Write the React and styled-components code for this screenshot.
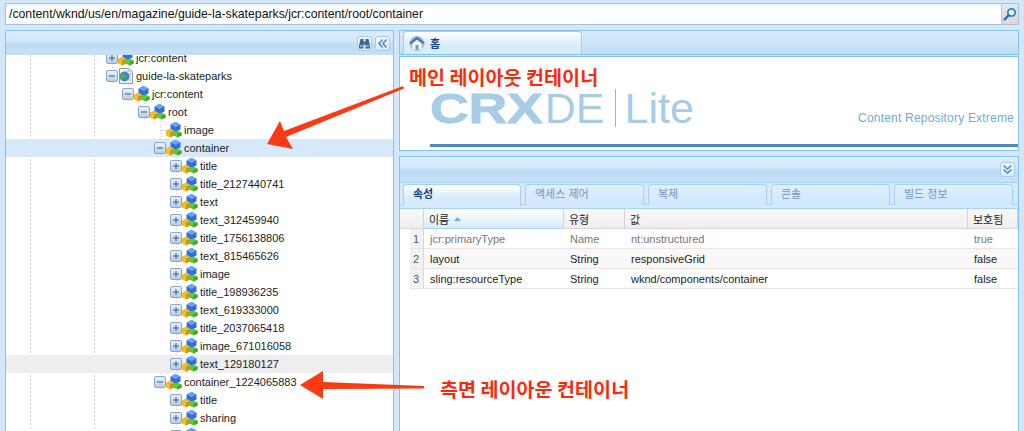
import React from 'react';
import styled, { createGlobalStyle } from 'styled-components';

const GlobalStyle = createGlobalStyle`
  html, body {
    margin: 0;
    padding: 0;
    width: 1024px;
    height: 431px;
    overflow: hidden;
    background: #d3e7fa;
    font-family: "Liberation Sans", "Noto Sans CJK KR", sans-serif;
  }
`;

const Page = styled.div`
  position: relative;
  width: 1024px;
  height: 431px;
  box-sizing: border-box;
  padding: 3px 5px 0;
  display: flex;
  flex-direction: column;
  overflow: hidden;
`;

const AddressBar = styled.div`
  height: 22px;
  box-sizing: border-box;
  border: 1px solid #abbde0;
  background: linear-gradient(#eef3f3 0, #ffffff 5px);
  display: flex;
  align-items: center;
  font-size: 12.25px;
  color: #111;
`;

const AddressText = styled.div`
  flex: 1;
  padding-left: 3px;
`;

const SearchButton = styled.div`
  width: 16px;
  height: 20px;
  background: linear-gradient(#dfeaf4, #e6d3d0);
  border-left: 1px solid #b9c6df;
  display: flex;
  align-items: center;
  justify-content: center;
`;

const Main = styled.div`
  flex: 1;
  display: flex;
  gap: 5px;
  margin-top: 5px;
  min-height: 0;
`;

const LeftPanel = styled.div`
  width: 389px;
  display: flex;
  flex-direction: column;
  border: 1px solid #85c2f8;
  border-bottom: 0;
  box-sizing: border-box;
  background: #fff;
`;

const PanelHeader = styled.div`
  height: ${p => p.$height}px;
  flex: none;
  box-sizing: border-box;
  display: flex;
  align-items: center;
  justify-content: flex-end;
  gap: 3px;
  padding-right: ${p => p.$right}px;
  background: linear-gradient(#dcedfc 0%, #d3e7fa 40%, #bfdcf5 55%, #c6e0f7 100%);
`;

const ToolButton = styled.div`
  width: 13px;
  height: 13px;
  border: 1px solid #a5cdf0;
  border-radius: 3px;
  background: linear-gradient(#f2f8fe, #d6e9fb);
  display: flex;
  align-items: center;
  justify-content: center;
`;

const Tree = styled.div`
  flex: 1;
  overflow: hidden;
  background-color: #fff;
  background-image:
    repeating-linear-gradient(#e8c9d0 0 2px, transparent 2px 4px),
    repeating-linear-gradient(#e8c9d0 0 2px, transparent 2px 4px);
  background-size: 1px 100%, 1px 100%;
  background-position: 24px 0, 88px 0;
  background-repeat: no-repeat;
`;

const TreeRows = styled.div`
  margin-top: -6px;
`;

const Row = styled.div`
  height: 18px;
  display: flex;
  align-items: center;
  padding-left: ${p => 100 + p.$depth * 16}px;
  font-size: 11px;
  color: #1c1c1c;
  background: ${p => (p.$mark === 'blue' ? '#d5e9fb' : p.$mark === 'grey' ? '#eeeeee' : 'transparent')};
`;

const Slot = styled.div`
  position: relative;
  width: 12px;
  height: 18px;
  flex: none;
  display: flex;
  align-items: center;
  background-image: repeating-linear-gradient(#e8c9d0 0 1px, transparent 1px 3px);
  background-size: 1px 100%;
  background-position: 6px 0;
  background-repeat: no-repeat;
`;

const Stub = styled.div`
  width: 6px;
  margin-left: 6px;
  border-top: 1px dotted #e0c0c8;
`;

const Label = styled.span`
  margin-left: 2px;
  white-space: nowrap;
`;

const RightColumn = styled.div`
  flex: 1;
  display: flex;
  flex-direction: column;
  min-width: 0;
`;

const TabHead = styled.div`
  height: 25px;
  flex: none;
  box-sizing: border-box;
  border: 1px solid #85c2f8;
  padding: 1px 0 0 3px;
  display: flex;
  align-items: flex-end;
  background: linear-gradient(#dcedfc, #bfdcf5);
`;

const HomeTab = styled.div`
  width: 179px;
  height: 23px;
  box-sizing: border-box;
  border: 1px solid #9ccbf3;
  border-bottom: 0;
  border-radius: 4px 4px 0 0;
  background: linear-gradient(#ffffff, #d8ecfd 60%);
  display: flex;
  align-items: center;
  gap: 5px;
  padding-left: 5px;
  font-size: 11px;
  font-weight: 700;
  color: #15428b;
`;

const LogoBody = styled.div`
  height: 95px;
  flex: none;
  margin-top: 1px;
  box-sizing: border-box;
  border: 1px solid #85c2f8;
  background: #fff;
  padding-top: 32px;
`;

const LogoRow = styled.div`
  height: 38px;
  display: flex;
  padding: 0 4px 0 30px;
  color: #a6cce6;
  font-size: 43px;
  line-height: 38px;
`;

const LogoBold = styled.span`
  display: inline-block;
  font-weight: 700;
  -webkit-text-stroke: 0.8px #a6cce6;
  transform: scaleX(1.24);
  transform-origin: left center;
  margin-right: 24px;
`;

const LogoDivider = styled.div`
  width: 1px;
  margin: 0 9px 0 10px;
  background: #8cbcdc;
`;

const Tagline = styled.div`
  margin-left: auto;
  align-self: flex-end;
  margin-bottom: 2px;
  font-size: 12px;
  line-height: 14px;
  letter-spacing: 0.2px;
  color: #6fabd8;
`;

const LogoBar = styled.div`
  height: 3px;
  margin: 17px 0 0 30px;
  background: #4a8bbb;
`;

const LowerPanel = styled.div`
  flex: 1;
  margin-top: 5px;
  box-sizing: border-box;
  border: 1px solid #85c2f8;
  border-bottom: 0;
  display: flex;
  flex-direction: column;
  background: #fff;
  min-height: 0;
`;

const TabStrip = styled.div`
  height: 26px;
  flex: none;
  box-sizing: border-box;
  display: flex;
  gap: 4px;
  padding: 1px 0 0 3px;
  border-top: 1px solid #a3d0f7;
  background: linear-gradient(#d6e9fb 0, #d6e9fb 21px, #a9d3f7 21px, #a9d3f7 22px, #d6e9fb 22px);
`;

const Tab = styled.div`
  width: ${p => p.$width}px;
  height: ${p => (p.$active ? 22 : 21)}px;
  box-sizing: border-box;
  border: 1px solid #a9d0f2;
  border-bottom: 0;
  border-radius: 4px 4px 0 0;
  background: ${p => (p.$active ? 'linear-gradient(#ffffff, #d8ecfd 60%)' : 'linear-gradient(#e2f0fc, #cde6fd)')};
  padding-left: 9px;
  line-height: 19px;
  font-size: 11px;
  font-weight: ${p => (p.$active ? 700 : 400)};
  color: ${p => (p.$active ? '#15428b' : '#6d97c4')};
`;

const Grid = styled.div`
  display: grid;
  grid-template-columns: 24px 140px 61px 343px 1fr;
  border-top: 1px solid #a9d3f7;
`;

const HeadCell = styled.div`
  height: 20px;
  box-sizing: border-box;
  display: flex;
  align-items: center;
  gap: 5px;
  padding-left: 5px;
  font-size: 11px;
  color: #222;
  border-right: 1px solid #ddd0d0;
  border-bottom: 1px solid ${p => (p.$sorted ? '#a9d3f7' : '#e2d2d2')};
  background: ${p => (p.$sorted ? 'linear-gradient(#ffffff, #d6ebfd)' : 'linear-gradient(#f9f8f8, #efefef)')};
`;

const Cell = styled.div`
  height: 20px;
  box-sizing: border-box;
  display: flex;
  align-items: center;
  padding-left: 6px;
  font-size: 11px;
  color: ${p => (p.$muted ? '#777' : '#1c1c1c')};
  background: ${p => (p.$odd ? '#fff' : '#faf7f8')};
  border-bottom: 1px solid #eee3e3;
`;

const NumCell = styled.div`
  height: 20px;
  box-sizing: border-box;
  margin-left: 10px;
  display: flex;
  align-items: center;
  justify-content: flex-end;
  padding-right: 4px;
  font-size: 11px;
  color: #555;
  background: #f2f2f2;
  border-right: 1px solid #e2d5d5;
  border-bottom: 1px solid #eee3e3;
`;

const Overlay = styled.svg`
  position: absolute;
  left: 0;
  top: 0;
  pointer-events: none;
`;

const Callout = styled.div`
  position: absolute;
  left: ${p => p.$left}px;
  top: ${p => p.$top}px;
  font-family: "Noto Sans CJK KR", sans-serif;
  font-size: 19.6px;
  line-height: 24px;
  font-weight: 700;
  color: #fb2a0a;
  white-space: nowrap;
`;

const NodeIcon = () => (
  <svg width="16" height="16" viewBox="0 0 16 16" style={{ flex: 'none' }}>
    <path d="M4.500 2.500 L9.500 0 L14.500 2.500 V7.500 L9.500 10 L4.500 7.500Z" fill="#2f6fd6" />
    <path d="M4.500 2.500 L9.500 0 L14.500 2.500 L9.500 5Z" fill="#6ba3f2" />
    <path d="M0 8.500 L4 6.500 L8 8.500 V13.500 L4 15.500 L0 13.500Z" fill="#ecbf30" />
    <path d="M4 10.500 L8 8.500 V13.500 L4 15.500Z" fill="#c9980f" />
    <path d="M7.500 10.500 L11.500 8.500 L15.500 10.500 V13.500 L11.500 15.500 L7.500 13.500Z" fill="#5fc738" />
    <path d="M11.500 12 L15.500 10.500 V13.500 L11.500 15.500Z" fill="#3ea520" />
  </svg>
);

const PageIcon = () => (
  <svg width="16" height="16" viewBox="0 0 16 16" style={{ flex: 'none' }}>
    <path d="M1.500 0.500 H11 L14.500 4 V15.500 H1.500Z" fill="#f0f3f6" stroke="#8d9aa8" />
    <path d="M9 3h3M11 6h2M12 9h1M11 12h2" stroke="#8aa0b4" />
    <circle cx="6.500" cy="8.500" r="5" fill="#3f86c9" />
    <path d="M3 7 Q6 4.500 8 7 Q8.500 10 5.500 10 Q4 12.500 2.500 10Z" fill="#55b13a" />
  </svg>
);

const Expander = ({ open }) => (
  <svg width="12" height="12" viewBox="0 0 12 12" style={{ position: 'relative' }}>
    <defs>
      <linearGradient id="exp" x1="0" y1="0" x2="0" y2="1">
        <stop offset="0" stopColor="#eaf2f9" />
        <stop offset="1" stopColor="#b5cde2" />
      </linearGradient>
    </defs>
    <rect x="0.500" y="0.500" width="11" height="11" rx="1.500" fill="url(#exp)" stroke="#86a8c5" />
    <path d={open ? 'M3 6h6' : 'M3 6h6M6 3v6'} stroke="#2f5f8c" strokeWidth="1" />
  </svg>
);

const SearchIcon = () => (
  <svg width="14" height="14" viewBox="0 0 14 14">
    <circle cx="8.500" cy="5.500" r="3.700" fill="#e8f3fb" stroke="#2a86c8" strokeWidth="1.800" />
    <path d="M5.500 8.500 L1.500 12.500" stroke="#1c6aa8" strokeWidth="2.200" strokeLinecap="round" />
  </svg>
);

const BinocularsIcon = () => (
  <svg width="11" height="11" viewBox="0 0 11 11">
    <path d="M1.500 1h3v2.500h2V1h3l1.500 6.500V10.500H6.500V6.500h-2V10.500H0V7.500Z" fill="#35689c" />
    <path d="M1 8h3M7 8h3" stroke="#d5e6f5" />
  </svg>
);

const ChevronsIcon = ({ dir }) => (
  <svg width="11" height="11" viewBox="0 0 11 11" style={{ transform: dir === 'down' ? 'rotate(-90deg)' : 'none' }}>
    <path d="M5.500 1.500 L2 5.500 L5.500 9.500 M9.500 1.500 L6 5.500 L9.500 9.500" fill="none" stroke="#4d8cc4" strokeWidth="1.600" />
  </svg>
);

const HomeIcon = () => (
  <svg width="16" height="16" viewBox="0 0 16 16" style={{ flex: 'none' }}>
    <circle cx="8" cy="8.500" r="7.500" fill="#a9bccf" />
    <path d="M0.500 7.500 L8 1.500 L15.500 7.500 L14 9 L8 4.500 L2 9Z" fill="#3f78b5" />
    <path d="M3.500 8.500 L8 5 L12.500 8.500 V14.500 H3.500Z" fill="#f4f6f8" />
    <rect x="6.500" y="10" width="3" height="4.500" fill="#6f97c2" />
  </svg>
);

const SortArrow = () => (
  <svg width="7" height="4" viewBox="0 0 7 4">
    <path d="M0 4 L3.500 0 L7 4Z" fill="#6aa9e2" />
  </svg>
);

const treeRows = [
  { label: 'jcr:content', depth: 0, exp: 'plus' },
  { label: 'guide-la-skateparks', depth: 0, exp: 'minus', page: true },
  { label: 'jcr:content', depth: 1, exp: 'minus' },
  { label: 'root', depth: 2, exp: 'minus' },
  { label: 'image', depth: 3 },
  { label: 'container', depth: 3, exp: 'minus', mark: 'blue' },
  { label: 'title', depth: 4, exp: 'plus' },
  { label: 'title_2127440741', depth: 4, exp: 'plus' },
  { label: 'text', depth: 4, exp: 'plus' },
  { label: 'text_312459940', depth: 4, exp: 'plus' },
  { label: 'title_1756138806', depth: 4, exp: 'plus' },
  { label: 'text_815465626', depth: 4, exp: 'plus' },
  { label: 'image', depth: 4, exp: 'plus' },
  { label: 'title_198936235', depth: 4, exp: 'plus' },
  { label: 'text_619333000', depth: 4, exp: 'plus' },
  { label: 'title_2037065418', depth: 4, exp: 'plus' },
  { label: 'image_671016058', depth: 4, exp: 'plus' },
  { label: 'text_129180127', depth: 4, exp: 'plus', mark: 'grey' },
  { label: 'container_1224065883', depth: 3, exp: 'minus' },
  { label: 'title', depth: 4, exp: 'plus' },
  { label: 'sharing', depth: 4, exp: 'plus' },
  { label: '', depth: 4, exp: 'plus' },
];

const props = [
  ['jcr:primaryType', 'Name', 'nt:unstructured', 'true'],
  ['layout', 'String', 'responsiveGrid', 'false'],
  ['sling:resourceType', 'String', 'wknd/components/container', 'false'],
];

const tabs = ['속성', '액세스 제어', '복제', '콘솔', '빌드 정보'];

export default function App() {
  return (
    <Page>
      <GlobalStyle />
      <AddressBar>
        <AddressText>/content/wknd/us/en/magazine/guide-la-skateparks/jcr:content/root/container</AddressText>
        <SearchButton><SearchIcon /></SearchButton>
      </AddressBar>
      <Main>
        <LeftPanel>
          <PanelHeader $height={24} $right={3}>
            <ToolButton><BinocularsIcon /></ToolButton>
            <ToolButton><ChevronsIcon /></ToolButton>
          </PanelHeader>
          <Tree>
            <TreeRows>
              {treeRows.map((r, i) => (
                <Row key={i} $depth={r.depth} $mark={r.mark}>
                  <Slot>
                    {r.exp ? <Expander open={r.exp === 'minus'} /> : <Stub />}
                  </Slot>
                  {r.page ? <PageIcon /> : <NodeIcon />}
                  <Label>{r.label}</Label>
                </Row>
              ))}
            </TreeRows>
          </Tree>
        </LeftPanel>
        <RightColumn>
          <TabHead>
            <HomeTab><HomeIcon />홈</HomeTab>
          </TabHead>
          <LogoBody>
            <LogoRow>
              <LogoBold>CRX</LogoBold>
              <span>DE</span>
              <LogoDivider />
              <span>Lite</span>
              <Tagline>Content Repository Extreme</Tagline>
            </LogoRow>
            <LogoBar />
          </LogoBody>
          <LowerPanel>
            <PanelHeader $height={25} $right={3}>
              <ToolButton><ChevronsIcon dir="down" /></ToolButton>
            </PanelHeader>
            <TabStrip>
              {tabs.map((t, i) => (
                <Tab key={t} $active={i === 0} $width={i === 0 ? 118 : 119}>{t}</Tab>
              ))}
            </TabStrip>
            <Grid>
              <HeadCell />
              <HeadCell $sorted>이름 <SortArrow /></HeadCell>
              <HeadCell>유형</HeadCell>
              <HeadCell>값</HeadCell>
              <HeadCell>보호됨</HeadCell>
              {props.map((p, i) => (
                <React.Fragment key={p[0]}>
                  <NumCell>{i + 1}</NumCell>
                  {p.map((v, j) => (
                    <Cell key={j} $muted={i === 0} $odd={i !== 1}>{v}</Cell>
                  ))}
                </React.Fragment>
              ))}
            </Grid>
          </LowerPanel>
        </RightColumn>
      </Main>
      <Overlay width="1024" height="431" viewBox="0 0 1024 431">
        <path d="M403 86 L404 88.500 L286 137 L293 149 L267 144 L280 121 L284 131Z" fill="#f93a12" />
        <path d="M424 386 L424 388.500 L323 389 L323 399 L300 385 L323 371 L323 382Z" fill="#f93a12" />
      </Overlay>
      <Callout $left={409} $top={65}>메인 레이아웃 컨테이너</Callout>
      <Callout $left={440} $top={377}>측면 레이아운 컨테이너</Callout>
    </Page>
  );
}
